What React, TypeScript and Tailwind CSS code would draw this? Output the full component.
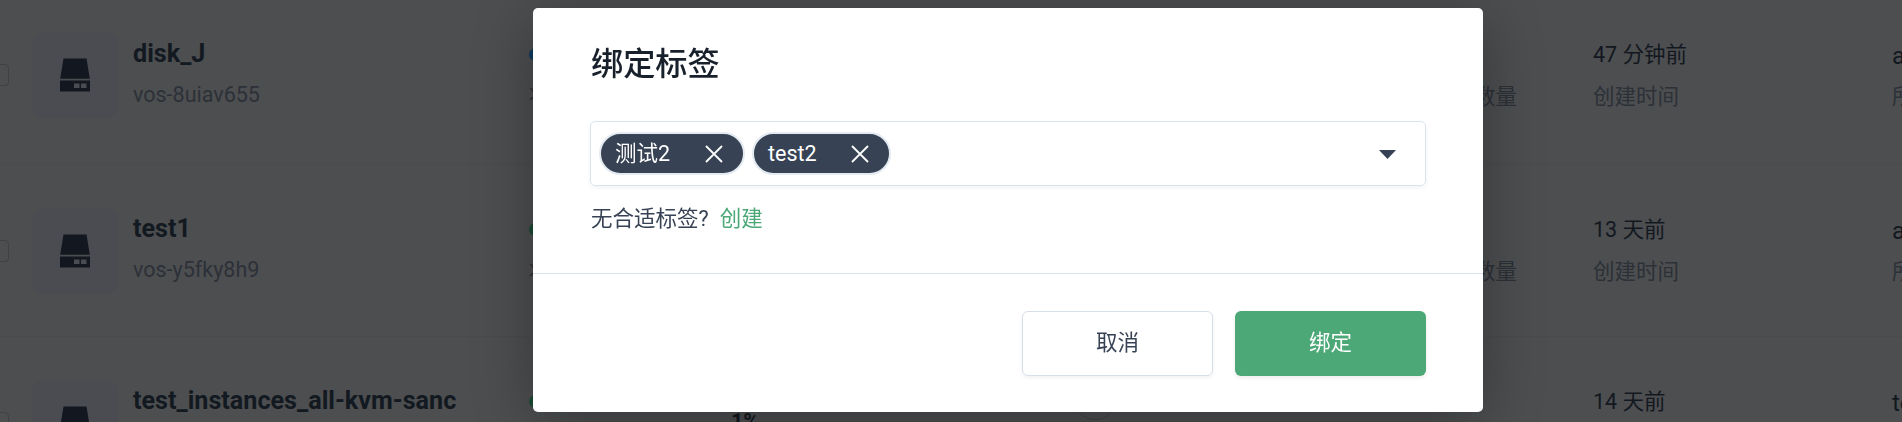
import React from "react";

type Row = { name: string; id: string; time: string; owner: string; usage: string; dot: string; height: string };

const rows: Row[] = [
  { name: "disk_J", id: "vos-8uiav655", time: "47 分钟前", owner: "a", usage: "1%", dot: "bg-[#0f3a5f]", height: "h-[179px]" },
  { name: "test1", id: "vos-y5fky8h9", time: "13 天前", owner: "a", usage: "1%", dot: "bg-[#1a4a33]", height: "h-[172px]" },
  { name: "test_instances_all-kvm-sanc", id: "", time: "14 天前", owner: "te", usage: "1%", dot: "bg-[#1a4a33]", height: "h-[172px]" },
];

function DiskIcon() {
  return (
    <svg viewBox="0 0 32 34" className="h-[34px] w-[32px]" fill="#131820">
      <path d="M4.5 0.5h23l3.3 20.3H1.2z" />
      <path fillRule="evenodd" d="M1 22.5h30v11H1zM15 25.6v4.3h5.5v-4.3zM22 25.6v4.3h5.5v-4.3z" />
    </svg>
  );
}

function Chip({ label, width }: { label: string; width: string }) {
  return (
    <div className={`flex h-[43px] items-center justify-between rounded-full border-2 border-[#e3eaf2] bg-[#374354] pr-[20px] pl-[14px] text-white ${width}`}>
      <span className="pt-[2px]">{label}</span>
      <svg viewBox="0 0 18 18" className="h-[18px] w-[18px]" stroke="#fff" strokeWidth="1.8" fill="none">
        <path d="M1 1l16 16M17 1L1 17" />
      </svg>
    </div>
  );
}

function ListRow({ row }: { row: Row }) {
  const detailed = row.id !== "";
  return (
    <div className={`flex w-[2100px] shrink-0 items-center border-b border-[#4a4b4d] ${row.height}`}>
      <div className="-ml-[13px] h-[22px] w-[22px] shrink-0 rounded-[4px] border border-[#3f4144]" />
      <div className="ml-[23px] flex h-[86px] w-[86px] shrink-0 items-center justify-center rounded-[12px] bg-[#4b4c51]">
        <DiskIcon />
      </div>
      <div className="mb-[2px] ml-[15px] flex w-[396px] shrink-0 flex-col gap-[9px]">
        <div className="text-[25.15px] leading-[32px] font-bold text-[#131920]">{row.name}</div>
        <div className="h-[32px] leading-[32px] text-[#2c3138]">{row.id}</div>
      </div>
      <div className="flex w-[171px] shrink-0 flex-col gap-[10px]">
        <div className="flex h-[32px] items-center">
          <span className={`h-[13px] w-[13px] rounded-full ${row.dot}`} />
        </div>
        <div className="h-[32px] leading-[32px] text-[#2c3138]">{detailed && "状态"}</div>
      </div>
      <div className="w-[90px] shrink-0 text-center text-[21.5px] font-bold text-[#131920]">{row.usage}</div>
      <div className="mb-[50px] ml-[283px] h-[44px] w-[44px] shrink-0 rounded-full border border-[#424345]" />
      <div className="mt-px ml-[314px] flex w-[162px] shrink-0 flex-col gap-[10px]">
        <div className="h-[32px]" />
        <div className="h-[32px] leading-[32px] text-[#2c3138]">{detailed && "快照数量"}</div>
      </div>
      <div className="mt-px flex w-[299px] shrink-0 flex-col gap-[10px]">
        <div className="leading-[32px] text-[#131820]">{row.time}</div>
        <div className="h-[32px] leading-[32px] text-[#2c3138]">{detailed && "创建时间"}</div>
      </div>
      <div className="mt-px flex w-[100px] shrink-0 flex-col gap-[8px]">
        <div className="text-[24px] leading-[34px] text-[#131920]">{row.owner}</div>
        <div className="h-[32px] leading-[32px] text-[#2c3138]">{detailed && "所"}</div>
      </div>
    </div>
  );
}

function BindTagDialog() {
  return (
    <div className="fixed inset-0 flex justify-center pl-[114px]">
      <div className="mt-[8px] flex h-[404px] w-[950px] flex-col rounded-[5px] bg-white text-[#374354] shadow-[0_10px_60px_rgba(0,0,0,0.3)]">
        <div className="flex h-[265px] flex-col px-[57px] pt-[31px]">
          <h2 className="h-[50px] pl-px text-[32.2px] leading-[50px] font-medium text-[#17202b]">绑定标签</h2>
          <div className="mt-[32px] flex h-[65px] items-center gap-[7px] rounded-[5px] border border-[#dae3ec] pr-[29px] pl-[8px] shadow-[0_2px_4px_rgba(0,0,0,0.05)]">
            <Chip label="测试2" width="w-[146px]" />
            <Chip label="test2" width="w-[139px]" />
            <svg viewBox="0 0 17 9" className="mt-px ml-auto h-[9px] w-[17px]" fill="#374354">
              <path d="M0 0h17L8.5 9z" />
            </svg>
          </div>
          <div className="mt-[17px] flex gap-[11px] pl-px leading-[32px]">
            <span>无合适标签?</span>
            <a className="text-[#4ca877]">创建</a>
          </div>
        </div>
        <div className="flex flex-1 justify-end gap-[22px] border-t border-[#dae3ec] px-[57px] pt-[37px]">
          <button className="h-[65px] w-[191px] rounded-[6px] border border-[#d9dfe8] bg-white shadow-[0_2px_4px_rgba(0,0,0,0.06)]">取消</button>
          <button className="h-[65px] w-[191px] rounded-[6px] bg-[#4ca877] text-white shadow-[0_2px_4px_rgba(0,0,0,0.08)]">绑定</button>
        </div>
      </div>
    </div>
  );
}

export default function App() {
  return (
    <div className="h-[422px] w-full overflow-hidden bg-[#4d4e50] font-['Roboto','Noto_Sans_CJK_SC',sans-serif] text-[21.5px]">
      <div className="-mt-[14px] flex flex-col">
        {rows.map((row) => (
          <ListRow key={row.name} row={row} />
        ))}
      </div>
      <BindTagDialog />
    </div>
  );
}
